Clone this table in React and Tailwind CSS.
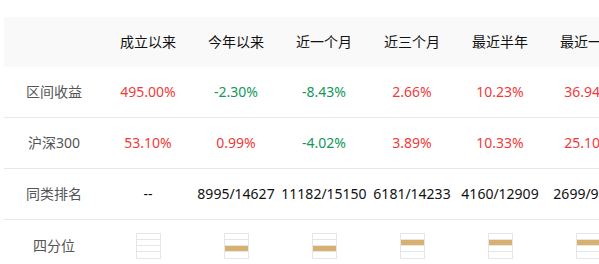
const columns = ['成立以来', '今年以来', '近一个月', '近三个月', '最近半年', '最近一年'];

const rows = [
  { label: '区间收益', values: ['495.00%', '-2.30%', '-8.43%', '2.66%', '10.23%', '36.94%'] },
  { label: '沪深300', values: ['53.10%', '0.99%', '-4.02%', '3.89%', '10.33%', '25.10%'] },
];

const ranks = ['--', '8995/14627', '11182/15150', '6181/14233', '4160/12909', '2699/9974'];
// which of the 4 cells is filled (0 = top), null for none
const quartiles = [null, 2, 2, 1, 1, 1];

function tone(v) {
  return v.startsWith('-') ? 'text-[#12985a]' : 'text-[#f03a3a]';
}

function Quartile({ level }) {
  return (
    <div className="flex w-[25px] flex-col border border-[#e6e6e6]">
      {[0, 1, 2, 3].map((i) => (
        <div
          key={i}
          className={`h-[6px] ${i < 3 ? 'border-b border-[#e6e6e6]' : ''} ${
            level === i ? 'bg-[#d8b06f]' : 'bg-white'
          }`}
        />
      ))}
    </div>
  );
}

function Row({ label, children, last }) {
  return (
    <div className={`flex h-[51px] items-center ${last ? '' : 'border-b border-[#e8e8e8]'}`}>
      <div className="w-[100px] shrink-0 text-center text-[#555]">{label}</div>
      {children}
    </div>
  );
}

export default function App() {
  return (
    <div
      className="h-[264px] w-[599px] overflow-hidden bg-white pt-[17px] pl-1 text-[14px] leading-none"
      style={{ fontFamily: '"Noto Sans", "Noto Sans CJK SC", sans-serif' }}
    >
      <div className="w-[700px]">
        {/* header */}
        <div className="flex h-[50px] items-center bg-[#f9f9f9] text-[#111]">
          <div className="w-[100px] shrink-0" />
          {columns.map((c) => (
            <div key={c} className="w-[88px] shrink-0 text-center">
              {c}
            </div>
          ))}
        </div>

        {rows.map((r) => (
          <Row key={r.label} label={r.label}>
            {r.values.map((v, i) => (
              <div key={i} className={`w-[88px] shrink-0 text-center ${tone(v)}`}>
                {v}
              </div>
            ))}
          </Row>
        ))}

        <Row label="同类排名">
          {ranks.map((v, i) => (
            <div key={i} className="w-[88px] shrink-0 whitespace-nowrap text-center text-[#111]">
              {v}
            </div>
          ))}
        </Row>

        <Row label="四分位" last>
          {quartiles.map((q, i) => (
            <div key={i} className="flex w-[88px] shrink-0 justify-center">
              <Quartile level={q} />
            </div>
          ))}
        </Row>
      </div>
    </div>
  );
}
